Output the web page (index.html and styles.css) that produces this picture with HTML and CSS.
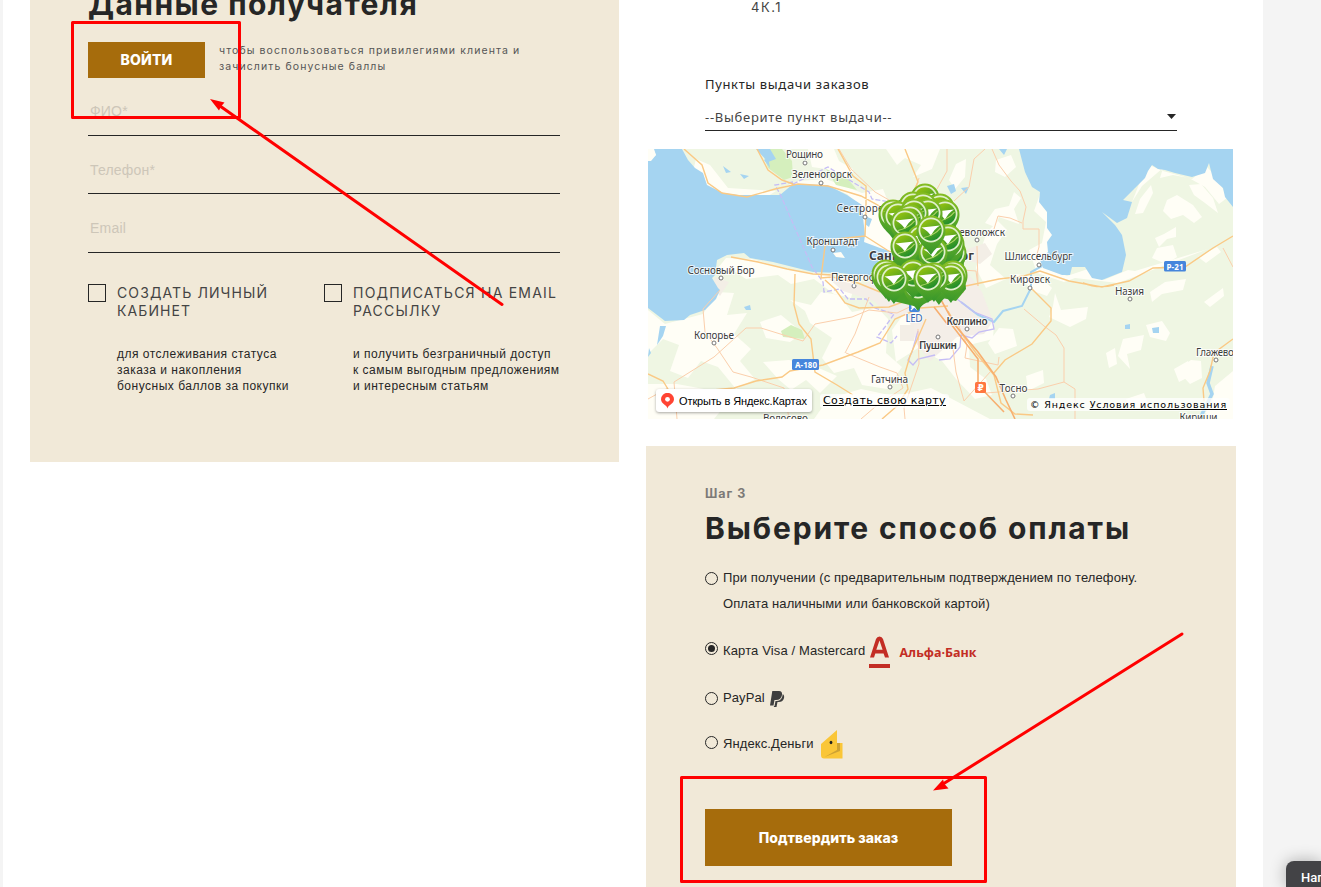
FILE: index.html
```html
<!DOCTYPE html>
<html lang="ru">
<head>
<meta charset="utf-8">
<title>Оформление заказа</title>
<link rel="stylesheet" href="styles.css">
</head>
<body>
<main class="page">
  <section class="recipient">
    <h2 class="title">Данные получателя</h2>
    <div class="login">
      <button class="btn btn-login">ВОЙТИ</button>
      <p class="login-note"><span class="n1">чтобы воспользоваться привилегиями клиента и</span><br><span class="n2">зачислить бонусные баллы</span></p>
    </div>
    <div class="field f1">ФИО*</div>
    <div class="field f2">Телефон*</div>
    <div class="field f3">Email</div>
    <div class="options">
      <div class="option">
        <i class="check"></i>
        <div>
          <div class="option-name">СОЗДАТЬ ЛИЧНЫЙ<br>КАБИНЕТ</div>
          <p class="option-text">для отслеживания статуса<br>заказа и накопления<br>бонусных баллов за покупки</p>
        </div>
      </div>
      <div class="option">
        <i class="check"></i>
        <div>
          <div class="option-name wide">ПОДПИСАТЬСЯ НА EMAIL<br>РАССЫЛКУ</div>
          <p class="option-text">и получить безграничный доступ<br>к самым выгодным предложениям<br>и интересным статьям</p>
        </div>
      </div>
    </div>
  </section>

  <div class="right">
    <section class="delivery">
      <div class="address">4К.1</div>
      <div class="pick-label">Пункты выдачи заказов</div>
      <div class="select"><span>--Выберите пункт выдачи--</span><i class="caret"></i></div>
    </section>
    <div class="map">
      <svg class="map-art" width="585" height="270" viewBox="0 0 585 270">
        <defs>
          <linearGradient id="leaf" x1="0" y1="0" x2=".6" y2="1"><stop offset="0" stop-color="#a9cc0a"/><stop offset=".5" stop-color="#6aae1c"/><stop offset="1" stop-color="#1c8c2c"/></linearGradient>
          <linearGradient id="drop" x1="0" y1="0" x2="0" y2="1"><stop offset="0" stop-color="#86bd22"/><stop offset="1" stop-color="#35962c"/></linearGradient>
          <g id="pin">
            <path d="M0 25C-4 18-15 12-14.500 0A14.500 14.500 0 0 1 14.500 0C15 12 4 18 0 25Z" fill="url(#drop)"/>
            <circle r="11.600" fill="url(#leaf)" stroke="#e0f0cb" stroke-width="1.700"/>
            <path d="M-9.500-2.500Q0-3.500 9-4.500Q3-1 0 6Q-3 .5-9.500-2.500Z" fill="#fff"/>
            <path d="M-7 7.500Q4 5 9.500-2" fill="none" stroke="#b3d868" stroke-width="1.200"/>
          </g>
        </defs>
        <rect width="585" height="270" fill="#eff6e3"/>
        <g fill="#fffef6">
          <path d="M138 37L150 32L178 30L214 44L235 40L243 60L250 110L222 102L213 88L213 58L199 45L178 36Z"/>
          <path d="M48 10L62 16L80 39L128 42L120 47L72 46L56 36L45 22Z"/>
          <path d="M160 0H186L191 12L205 20L199 30L178 20L164 18Z"/>
          <path d="M238 0L249 16L257 9L273 16L265 28L284 20L292 0Z"/>
          <path d="M66 124L78 109L104 110L134 119L163 124L188 128L208 130L203 149L186 145L166 130L143 135L130 126L98 130L83 120Z"/>
          <path d="M0 161L17 175L55 165L69 143L86 144L79 166L99 164L86 185L103 200L92 212L107 230L88 240L70 218L53 212L40 229L22 222L31 196L15 190L0 205Z"/>
          <path d="M142 151L163 156L173 143L191 146L204 163L229 158L240 170L238 204L254 218L239 240L214 236L206 219L186 224L174 209L184 189L162 174L157 162Z"/>
          <path d="M112 173L133 166L155 184L142 193L118 189Z"/><path d="M115 213L141 211L166 217L189 227L172 244L158 231L143 241L130 230Z"/>
          <path d="M0 235L29 235L56 240L75 259L66 270H0Z"/><path d="M180 250L213 240L246 247L283 239L306 251L342 270H166Z"/>
          <path d="M262 156L304 148L326 157L346 174L345 190L321 196L322 218L338 230L344 246L327 250L308 230L294 212L270 199L248 213L244 181Z"/>
          <path d="M308 15L318 10L317 28L307 40L301 31Z"/><path d="M348 11L363 6L368 18L357 28L347 23Z"/><path d="M366 43L373 49L366 60L371 75L351 68L347 78L337 74L347 60L361 57Z"/>
          <path d="M392 45L399 63L400 79L408 87L402 105L394 117L419 127L440 120L456 131L480 121L487 122L560 100L470 134L427 129L416 133L389 124L381 101L394 94L398 73L386 62Z"/>
          <path d="M484 53L499 15L515 22L544 30L559 18L571 31L579 49L571 55L557 38L541 29L525 26L512 29L515 19L494 37Z"/>
          <path d="M492 50L503 36L505 44L495 64L487 65Z"/><path d="M519 51L529 46L545 56L554 68L546 74L535 66L523 70L515 62Z"/><path d="M541 36L553 35L565 49L570 64L557 54L546 46Z"/>
          <path d="M516 85L528 78L528 88L519 90L511 98L507 89Z"/><path d="M550 108L569 98L573 103L558 114Z"/><path d="M509 99L525 96L529 108L518 115L504 109Z"/>
          <path d="M339 83L350 72L359 81L349 95L342 116L358 130L338 139L328 119L334 97Z"/>
          <path d="M367 125L392 128L404 139L399 147L388 143L378 135Z"/><path d="M407 144L413 161L440 158L438 170L422 178L401 168L405 157Z"/>
          <path d="M502 143L517 133L538 130L535 141L514 145L504 153Z"/><path d="M556 153L575 139L576 147L562 158Z"/><path d="M475 190L496 186L493 201L479 205L482 220L470 207Z"/><path d="M458 204L467 199L469 215L461 219Z"/><path d="M498 176L514 172L522 184L518 192L502 188Z"/><path d="M543 211L553 212L554 229L542 235L529 221Z"/>
          <path d="M378 227L395 221L396 234L380 242Z"/><path d="M351 179L365 180L369 197L347 205L340 194Z"/><path d="M526 220L540 212L545 226L531 233Z"/><path d="M478 250L496 244L501 257L482 259Z"/><path d="M585 222L567 237L564 255L557 264L571 270H585Z"/>
        </g>
        <g fill="#d5efbd"><path d="M113 0H134L144 12L145 28L136 31L120 19Z"/><path d="M133 182L143 176L154 181L157 190L135 188Z"/><path d="M178 20L200 30L209 41L188 36Z"/></g>
        <path fill="#f4eee8" d="M256 110L311 112L334 143L345 172L336 185L309 188L282 212L268 194L259 164L244 170L226 152L195 142L180 129L214 137L238 125Z"/>
        <path fill="#f3eee6" d="M317 101L337 94L344 105L332 115L318 111ZM67 128L81 133L72 147L65 139ZM252 176h14v16h-14Z"/>
        <g fill="#a5d4f1">
          <path d="M0 12L8 6L5 0H34L40 11L47 19L55 24L59 36L75 44L90 46H132L145 35L179 36L199 46L214 56L215 68L217 86L216 93L232 99L245 103L252 109L246 124L233 129L209 126L192 124L165 123L145 118L125 113L102 109L96 104L79 106L69 111L67 126L64 129L70 139L72 141L68 150L57 161L42 166L36 171L17 172L0 159Z"/>
          <path d="M371 0L377 23L384 38L392 43L391 53L399 63V79L404 86L399 93L400 103L392 111L395 119L414 126L422 126L424 118L437 118L444 129L454 131L474 123L478 106L474 86L467 76L454 63L469 74L479 69L484 53L475 51L487 39L497 29L500 22L504 16L510 20L517 21L527 24L544 28L557 24L561 14L565 30L575 39L577 48L585 58V0Z"/>
          <path d="M108 0H122L128 10L120 13ZM116 11L120 8L122 19ZM75 17L83 23L78 24ZM92 25L101 27L96 30ZM299 37L306 35L308 42L303 45ZM313 39L321 38L318 45ZM351 0h8l-3 6ZM217 67L224 70L221 78L217 75ZM12 177L18 177L15 187L9 196ZM1 199L3 204L0 208ZM96 158L102 156L103 161L98 161ZM477 176l5-1v5h-5ZM504 179l7-1v6h-6ZM402 246l5-2v6h-6Z"/>
          <path fill="#fffef6" d="M0 0H6L8 6L3 12H0ZM185 104L193 103L197 109L188 108Z"/>
        </g>
        <g fill="none" stroke="#a5d4f1"><path stroke-width="2" d="M394 117L383 123L383 139L374 157L355 162L346 173L330 166L313 153"/><path stroke-width="3.500" d="M564 217L560 234L564 245L555 263L552 270"/><path stroke-width="2" d="M270 118L287 139"/></g>
        <g fill="none" stroke="#c5bdf5" stroke-width="1.300">
          <path stroke-dasharray="5 2" d="M145 33L127 36L133 47L164 118L175 133L176 143L192 140L200 150L218 150L227 159L246 165L237 178L229 188L243 194L249 187M145 35L180 18L221 43L224 50L242 53"/>
          <path d="M309 150L326 163L344 170L346 180L331 183L324 189L313 186L312 198L302 210L291 211M270 182L264 203L260 211L265 216L270 210L287 206"/>
        </g>
        <g fill="none" stroke="#fbcfac" stroke-width="1">
          <path d="M191 0L203 20L227 43L248 55L264 67M271 29L262 54M299 0L299 22L289 40M337 0L326 10L321 38L306 52M344 0L351 16L363 32L372 42L378 58L375 72L375 80L391 80L391 98L387 112M346 80L350 67L362 69L374 74M329 97L330 137M303 120L328 122L330 137M72 141L55 160L57 183M57 183L69 199L85 223L103 228M26 233L66 208L98 179L113 179L155 192M155 192L167 175L204 168L221 161L249 164L272 153M198 204L232 218L249 224L255 239L227 258L213 270M197 204L207 185L221 148M270 180L271 215L256 259L257 270M26 233L29 270M103 228L136 239L141 270M309 173L319 196L317 209L350 216L351 208M376 160L396 177L408 186L416 199L416 233L390 240L338 244M416 233L427 240V270M0 250L20 239M305 200L308 223L316 252L343 222M275 153L316 143M575 99L585 118"/>
        </g>
        <g fill="none" stroke="#fac985" stroke-width="1.400">
          <path d="M36 0L54 16L60 34L74 44L99 48L127 40L150 35L180 37L213 47L237 60L258 67M109 0L120 21L134 31L145 35M190 0L205 27L218 37L218 62L217 87L239 101L252 108M257 0L270 33L258 59M83 108L110 113L139 120L165 125L185 126M217 87L189 90L177 97L173 129L184 128L210 134L232 143M0 117M0 225L15 232L23 245M147 125L146 156L151 175L163 190L167 223L189 236L205 246M23 245L86 239L108 232L134 228L142 222L175 216L210 203L232 194L247 170L272 159L300 157M177 131L187 140L197 154L211 159L241 158L263 150"/>
          <path d="M313 138L351 130L376 127L392 122L421 132L454 138L481 132L505 119L537 118L565 99L585 87M300 162L309 178L328 204L346 226L353 254L367 265L385 266M384 140L403 159L403 172L384 195L357 211L345 225M278 170L262 207L257 224L260 240L249 257L234 270M435 134Q450 140 466 136M585 190L566 204L562 222L555 239L556 252"/>
        </g>
        <g fill="none" stroke="#f7af70" stroke-width="1.600"><path d="M287 140L307 176L330 203L348 228L358 251L367 270M303 175L330 210L330 236L356 263M252 60L262 70L266 105L263 153M286 158L300 176"/></g>
        <g class="place-dots"><circle cx="157" cy="14" r="2"/><circle cx="173" cy="34" r="2"/><circle cx="217" cy="68" r="2"/><circle cx="185" cy="101" r="2"/><circle cx="73" cy="129" r="2"/><circle cx="206" cy="137" r="2"/><circle cx="329" cy="91" r="2"/><circle cx="391" cy="116" r="2"/><circle cx="382" cy="139" r="2"/><circle cx="482" cy="150" r="2"/><circle cx="66" cy="194" r="2"/><circle cx="290" cy="188" r="2"/><circle cx="319" cy="180" r="2"/><circle cx="242" cy="238" r="2"/><circle cx="365" cy="247" r="2"/><circle cx="568" cy="211" r="2"/></g>
        <g class="places">
          <text x="138" y="9" textLength="37">Рощино</text><text x="144" y="28.500" textLength="60">Зеленогорск</text><text x="188.500" y="62.500" textLength="59">Сестрорецк</text><text x="158.500" y="96" textLength="52">Кронштадт</text><text x="39.500" y="125" textLength="67">Сосновый Бор</text><text x="183" y="132" textLength="45">Петергоф</text><text x="300" y="87" textLength="57">Всеволожск</text><text x="356.500" y="111" textLength="68">Шлиссельбург</text><text x="362" y="134" textLength="40">Кировск</text><text x="467" y="145.500" textLength="29">Назия</text><text x="46" y="190" textLength="40">Копорье</text><text x="223" y="234" textLength="37">Гатчина</text><text x="351.500" y="243" textLength="28">Тосно</text><text x="548" y="207" textLength="38">Глажево</text><text x="115" y="272.500" textLength="45">Волосово</text><text x="531.500" y="271.500" textLength="38">Кириши</text>
          <text class="town" x="298.500" y="176" textLength="41">Колпино</text><text class="town" x="271" y="199.500" textLength="38">Пушкин</text>
          <text class="city" x="221" y="111" textLength="105">Санкт-Петербург</text>
          <text class="air" x="257.500" y="172.500" textLength="17">LED</text>
        </g>
        <rect x="261" y="152" width="11" height="11" rx="2" fill="#4686dc"/><path d="M263 161L270 154M264 156L270 161M264 154V158H269" stroke="#fff" stroke-width="1.300"/>
        <g class="road"><rect x="144" y="210" width="27" height="11" rx="1.500"/><text x="147" y="219" textLength="22">А-180</text><rect x="516" y="112" width="22" height="10.500" rx="1.500"/><text x="518.500" y="120.500" textLength="17">Р-21</text></g>
        <rect x="327" y="233" width="11" height="11" rx="1.500" fill="#ff7640"/><text x="329.500" y="242" class="rub">₽</text>
        <path d="M236 60L262 45L300 55L314 95L318 140L308 152L290 148L270 158L245 152L232 130L250 105Z" fill="#479f29"/>
        <use href="#pin" x="277" y="49"/><use href="#pin" x="292" y="59"/><use href="#pin" x="265" y="57"/><use href="#pin" x="297" y="65"/><use href="#pin" x="275" y="58"/><use href="#pin" x="245" y="65"/><use href="#pin" x="250" y="67"/><use href="#pin" x="280" y="64"/><use href="#pin" x="266" y="64"/><use href="#pin" x="262" y="70"/><use href="#pin" x="257" y="74"/><use href="#pin" x="304" y="104"/><use href="#pin" x="290" y="108"/><use href="#pin" x="302" y="95"/><use href="#pin" x="273" y="90"/><use href="#pin" x="300" y="90"/><use href="#pin" x="285" y="103"/><use href="#pin" x="283" y="81"/><use href="#pin" x="257" y="97"/><use href="#pin" x="270" y="137"/><use href="#pin" x="238" y="125"/><use href="#pin" x="241" y="128"/><use href="#pin" x="265" y="125"/><use href="#pin" x="305" y="126"/><use href="#pin" x="291" y="131"/><use href="#pin" x="303" y="129"/><use href="#pin" x="286" y="128"/><use href="#pin" x="280" y="129"/><use href="#pin" x="246" y="130"/>
      </svg>
      <div class="map-bar">
        <span class="open-map"><svg width="13" height="16" viewBox="0 0 13 16"><path d="M6.500 15.500C5.800 11.800 0 11 0 6.300A6.500 6.500 0 0 1 13 6.300C13 11 7.200 11.800 6.500 15.500Z" fill="#f43"/><circle cx="6.500" cy="6.300" r="2.400" fill="#fff"/></svg><span>Открыть в Яндекс.Картах</span></span>
        <a class="create">Создать свою карту</a>
        <span class="copy"><span>© Яндекс</span> <u>Условия использования</u></span>
      </div>
    </div>
    <section class="payment">
      <div class="step">Шаг 3</div>
      <h2 class="title title-pay">Выберите способ оплаты</h2>
      <div class="pay p1"><i class="radio"></i><span>При получении (с предварительным подтверждением по телефону.<br>Оплата наличными или банковской картой)</span></div>
      <div class="pay p2"><i class="radio on"></i><span>Карта Visa / Mastercard</span>
        <svg class="alfa" width="110" height="34" viewBox="0 0 110 34"><path d="M1 28H22V32H1Z" fill="#c32d24"/><path fill="#c32d24" fill-rule="evenodd" d="M2 21.500L8 3Q9 .5 11.500 .5Q14 .5 15 3L21 21.500H17L15.600 17.500H7.300L6 21.500ZM8.300 13.800H14.600L11.500 4.500Z"/><text x="31.500" y="21" textLength="77" lengthAdjust="spacingAndGlyphs">Альфа·Банк</text></svg></div>
      <div class="pay p3"><i class="radio"></i><span>PayPal</span>
        <svg class="paypal" width="15" height="17" viewBox="0 0 15 17"><path d="M2.300 0H9Q12.500.2 12 4Q11.200 9 6 9H4.500L3.500 14.500H0Z" fill="#3f3f3f"/><path d="M12.800 3Q15 5 13.700 8Q12.500 11 9 11H7.500L6.500 16H3.800L4 15H4.500L5.500 10H7Q12 10 12.800 3Z" fill="#3f3f3f"/></svg></div>
      <div class="pay p4"><i class="radio"></i><span>Яндекс.Деньги</span>
        <svg class="wallet" width="22" height="29" viewBox="0 0 22 29"><path d="M0 14L16 0V13H21.500V28.500H3Q0 28.500 0 25Z" fill="#fac637"/><path d="M3.500 27L16 20V13H19V21Z" fill="#cda233"/><ellipse cx="10" cy="12.500" rx="1.400" ry="1.800" fill="#222"/></svg></div>
      <button class="btn btn-confirm">Подтвердить заказ</button>
    </section>
  </div>
</main>
<aside class="chat">Нап</aside>
<svg class="marks" width="1321" height="887" viewBox="0 0 1321 887">
  <g fill="none" stroke="#f00" stroke-width="3" stroke-linejoin="round" stroke-linecap="round"><path d="M72.500 22.500H239.500V117.500H72.500ZM681.500 777.500H985.500V881.500H681.500ZM502 304.500L220 106M1182 634L943 784"/></g>
  <path fill="#f00" d="M210 99L224.500 102.500L221 106.500L219 110.500ZM933 790.500L943 779.500L944.500 784L948.500 788.500Z"/>
</svg>
</body>
</html>
```
FILE: styles.css
```css
* { box-sizing: border-box; }
body { margin: 0; width: 1321px; height: 887px; overflow: hidden; background: #f4f4f4; color: #262626; font-family: "Liberation Sans", Arial, sans-serif; position: relative; }
h2, p { margin: 0; }
.page { width: 1260px; height: 887px; margin-left: 3px; padding-left: 27px; background: #fff; display: flex; gap: 27px; align-items: flex-start; overflow: hidden; }
.recipient { width: 589px; height: 462px; padding: 0 58px; background: #f1e9d8; }
.title { font: 700 30px/32px Inter, sans-serif; letter-spacing: 1.450px; white-space: nowrap; }
.recipient .title { margin-top: -12px; }
.login { display: flex; gap: 14px; margin-top: 22px; }
.btn { border: 0; padding: 0; background: #a66c0c; color: #fff; font: 800 14px/20px Inter, sans-serif; display: block; }
.btn-login { width: 117px; height: 36px; padding-bottom: 1px; letter-spacing: .2px; }
.login-note { font: 400 10.5px/16px Inter, sans-serif; letter-spacing: 1.100px; color: #555; padding-top: 1px; white-space: nowrap; }
.field { width: 472px; border-bottom: 1px solid #262626; padding-left: 2px; font-size: 14px; letter-spacing: .2px; color: #cdc6b8; }
.f1 { height: 58px; line-height: 67px; }
.f2 { height: 58px; line-height: 69px; }
.f3 { height: 59px; line-height: 68px; }
.options { display: flex; margin-top: 31px; }
.option { width: 236px; display: flex; gap: 11px; white-space: nowrap; }
.check { width: 18px; height: 18px; border: 1px solid #262626; flex: none; }
.option-name { font: 400 14px/18px Inter, sans-serif; letter-spacing: 1.100px; color: #444; }
.wide { letter-spacing: 1.230px; }
.option-text { margin-top: 26px; font-size: 12px; line-height: 16px; letter-spacing: .5px; }

.right { width: 590px; }
.delivery { padding-left: 59px; height: 149px; font-family: "Noto Sans", sans-serif; font-size: 13px; letter-spacing: .65px; }
.address { margin-left: 46px; height: 16px; line-height: 15px; font-family: Inter, sans-serif; letter-spacing: 1.500px; color: #444; }
.pick-label { margin-top: 58px; line-height: 20px; }
.select { margin-top: 11px; width: 472px; height: 26px; line-height: 25px; border-bottom: 1px solid #262626; display: flex; justify-content: space-between; letter-spacing: .72px; color: #444; }
.caret { margin: 9px 1px 0 0; width: 9px; height: 5px; background: #262626; clip-path: polygon(0 0, 100% 0, 50% 100%); }
.map { margin-left: 2px; width: 585px; height: 270px; display: grid; overflow: hidden; }
.map > * { grid-area: 1 / 1; }
.map-art { display: block; }
.place-dots { fill: #fff; stroke: #777; stroke-width: 1; }
.places { font-family: "Noto Sans", sans-serif; font-size: 10px; fill: #3d3d3d; stroke: rgba(255,255,255,.8); stroke-width: 2px; paint-order: stroke; }
.places .town { font-weight: 600; }
.places .city { font-size: 12px; font-weight: 700; }
.places .air { fill: #3467b0; }
.road rect { fill: #4686dc; }
.road text { font: 700 8px "Noto Sans", sans-serif; fill: #fff; }
.rub { font: 700 9px "DejaVu Sans", sans-serif; fill: #fff; }
.map-bar { position: relative; align-self: end; height: 30px; display: flex; align-items: flex-start; padding-left: 8px; font: 400 11px/14px "DejaVu Sans", sans-serif; color: #000; white-space: nowrap; }
.open-map { width: 156px; height: 23px; border-radius: 3px; background: #fff; box-shadow: 0 1px 3px rgba(0,0,0,.35); display: flex; align-items: center; gap: 5px; padding-left: 5px; font: 11px/14px "Liberation Sans", sans-serif; letter-spacing: -.1px; }
.create { margin: 5px 0 0 8px; padding: 0 3px; letter-spacing: .37px; text-decoration: underline; background: rgba(255,255,255,.7); border-radius: 3px; }
.copy { margin: 9px 3px 0 auto; padding: 0 3px; font-size: 9.5px; line-height: 13px; letter-spacing: .880px; background: rgba(255,255,255,.75); border-radius: 3px; }
.payment { margin-top: 27px; height: 441px; background: #f1e9d8; padding: 38px 0 0 59px; }
.step { font: 700 12.5px/19px Inter, sans-serif; letter-spacing: 1px; color: #7c7a77; }
.title-pay { margin-top: 9px; letter-spacing: 1.850px; }
.pay { display: flex; font-size: 13px; line-height: 26px; letter-spacing: .1px; gap: 5px; white-space: nowrap; }
.radio { width: 13px; height: 13px; border: 1px solid #262626; border-radius: 50%; margin-top: 7px; flex: none; }
.on { padding: 2px; background: #262626 content-box; }
.p1 { margin-top: 21px; }
.p2 { margin-top: 15px; height: 46px; line-height: 32px; padding-top: 3px; letter-spacing: .13px; }
.p2 .radio { margin-top: 7px; }
.alfa { margin: 1px 0 0 -2px; }
.alfa text { font: 700 13px "Open Sans", sans-serif; letter-spacing: 0; fill: #c32d24; }
.p3 { margin-top: 7px; }
.p3 .radio { margin-top: 7px; }
.paypal { margin-top: 6px; }
.p4 { margin-top: 18px; height: 32px; line-height: 30px; }
.p4 .radio { margin-top: 7px; }
.wallet { margin: 1px 0 0 2px; }
.btn-confirm { margin-top: 48px; width: 247px; height: 57px; letter-spacing: .05px; }
.chat { position: absolute; left: 1286px; top: 861px; width: 35px; height: 26px; padding: 8px 0 0 15px; overflow: hidden; background: #434346; color: #fff; border-radius: 8px 0 0; box-shadow: 0 0 16px rgba(0,0,0,.3); font: 500 13px/18px Roboto, sans-serif; }
.marks { position: absolute; left: 0; top: 0; }
```
